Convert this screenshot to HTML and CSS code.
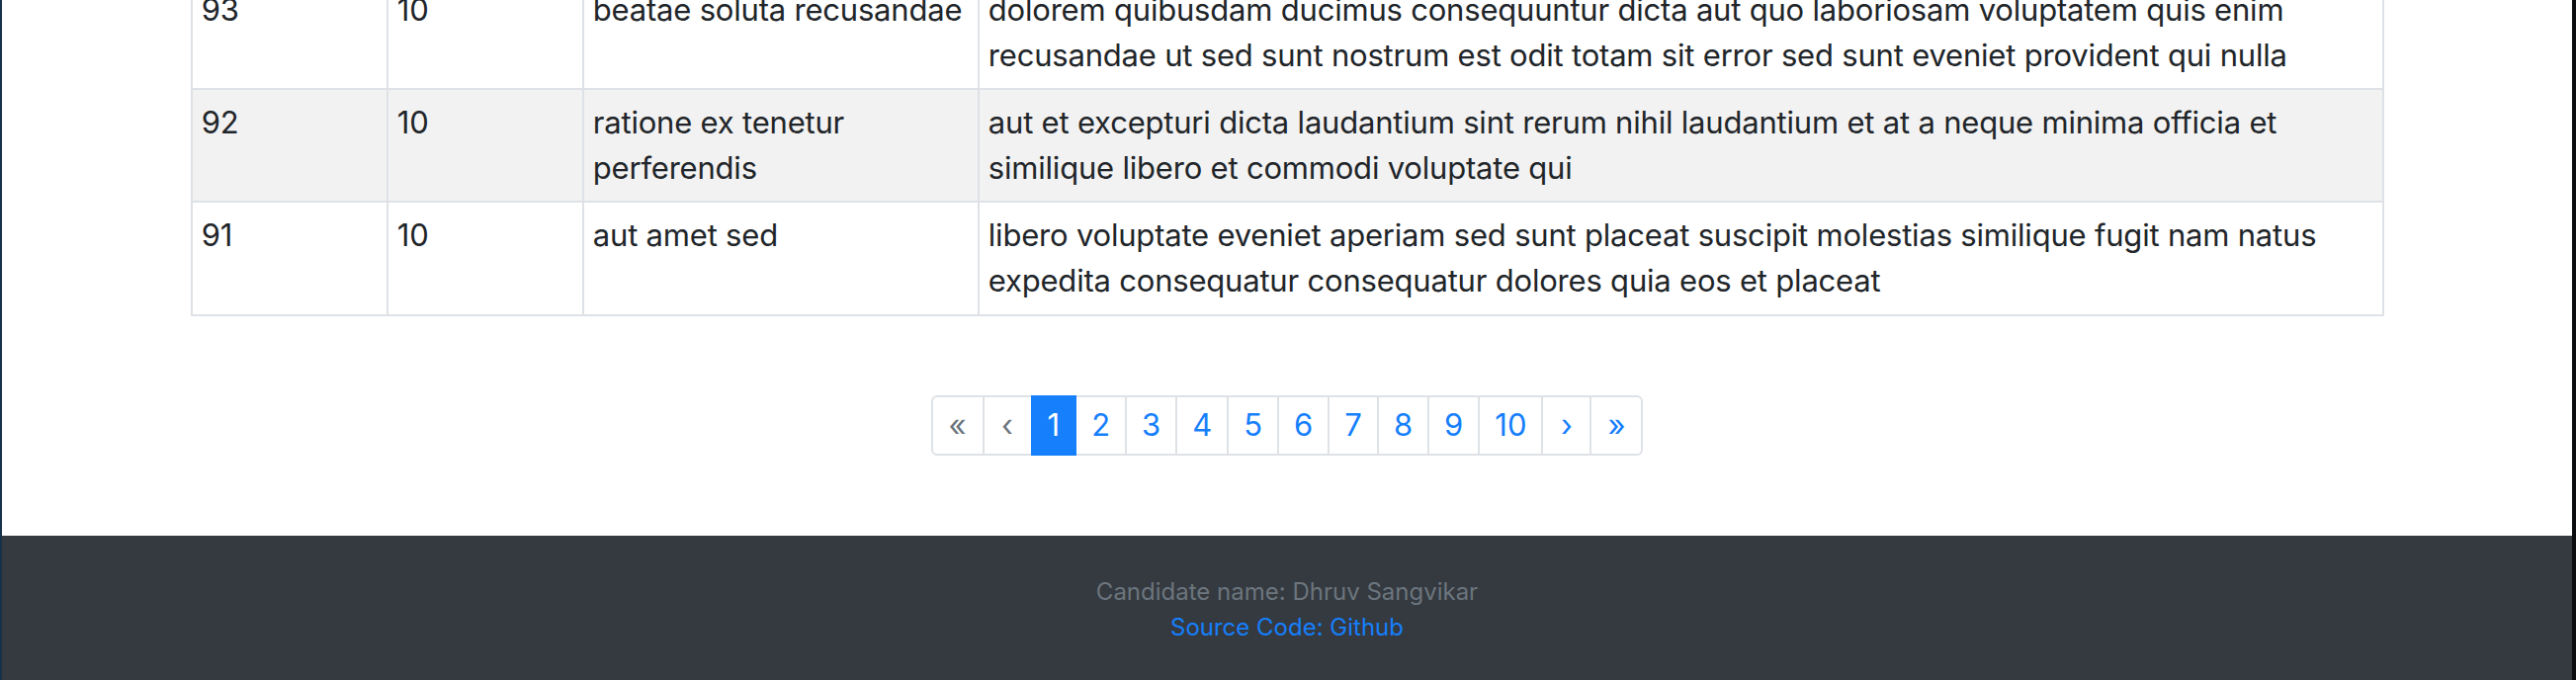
FILE: index.html
```html
<!DOCTYPE html>
<html lang="en">
<head>
<meta charset="utf-8">
<title>Posts</title>
<link rel="stylesheet" href="styles.css">
</head>
<body>
<main class="page">
  <table class="posts">
    <colgroup>
      <col class="c-id">
      <col class="c-user">
      <col class="c-title">
      <col class="c-body">
    </colgroup>
    <tbody>
      <tr>
        <td>93</td>
        <td>10</td>
        <td>beatae soluta recusandae</td>
        <td>dolorem quibusdam ducimus consequuntur dicta aut quo laboriosam voluptatem quis enim recusandae ut sed sunt nostrum est odit totam sit error sed sunt eveniet provident qui nulla</td>
      </tr>
      <tr class="striped">
        <td>92</td>
        <td>10</td>
        <td>ratione ex tenetur perferendis</td>
        <td>aut et excepturi dicta laudantium sint rerum nihil laudantium et at a neque minima officia et similique libero et commodi voluptate qui</td>
      </tr>
      <tr>
        <td>91</td>
        <td>10</td>
        <td>aut amet sed</td>
        <td>libero voluptate eveniet aperiam sed sunt placeat suscipit molestias similique fugit nam natus expedita consequatur consequatur dolores quia eos et placeat</td>
      </tr>
    </tbody>
  </table>

  <nav class="pager">
    <ul class="pagination">
      <li class="page-item disabled"><span class="page-link arrow-double">«</span></li>
      <li class="page-item disabled"><span class="page-link arrow-single">‹</span></li>
      <li class="page-item active"><span class="page-link">1</span></li>
      <li class="page-item"><a class="page-link" href="#">2</a></li>
      <li class="page-item"><a class="page-link" href="#">3</a></li>
      <li class="page-item"><a class="page-link" href="#">4</a></li>
      <li class="page-item"><a class="page-link" href="#">5</a></li>
      <li class="page-item"><a class="page-link" href="#">6</a></li>
      <li class="page-item"><a class="page-link" href="#">7</a></li>
      <li class="page-item"><a class="page-link" href="#">8</a></li>
      <li class="page-item"><a class="page-link" href="#">9</a></li>
      <li class="page-item"><a class="page-link" href="#">10</a></li>
      <li class="page-item"><a class="page-link arrow-single" href="#">›</a></li>
      <li class="page-item"><a class="page-link arrow-double" href="#">»</a></li>
    </ul>
  </nav>
</main>

<footer class="footer">
  <div class="footer-name">Candidate name: Dhruv Sangvikar</div>
  <a class="footer-link" href="#">Source Code: Github</a>
</footer>
</body>
</html>
```

FILE: styles.css
```css
* {
  box-sizing: border-box;
}

html {
  background: #0b0d11;
}

body {
  margin: 0;
  min-height: 688px;
  background: #ffffff;
  border-left: 2px solid #17314a;
  border-right: 4px solid #0b0d11;
  font-family: Inter, "Liberation Sans", Arial, sans-serif;
  font-size: 31px;
  line-height: 1.5;
  color: #212529;
  overflow: hidden;
}

.page {
  display: flex;
  flex-direction: column;
  align-items: center;
}

.posts {
  width: 2219px;
  margin-top: -25px;
  border-collapse: collapse;
  table-layout: fixed;
  border: 2px solid #dee2e6;
}

.c-id,
.c-user {
  width: 198px;
}

.c-title {
  width: 400px;
}

.posts td {
  border: 2px solid #dee2e6;
  padding: 9.6px 9.3px;
  vertical-align: top;
  letter-spacing: -0.2px;
}

.posts tr.striped {
  background: #f2f2f2;
}

.pager {
  margin: 80px 0 81px;
}

.pagination {
  display: flex;
  list-style: none;
  margin: 0;
  padding: 0;
}

.page-link {
  display: block;
  position: relative;
  padding: 9.1px 15px;
  margin-left: -2px;
  line-height: 1.25;
  color: #167ffc;
  text-decoration: none;
  background: #ffffff;
  border: 2px solid #dee2e6;
}

.page-link.arrow-double {
  padding-left: 16px;
  padding-right: 16px;
}

.page-link.arrow-single {
  padding-left: 17.5px;
  padding-right: 17.5px;
}

.page-item:first-child .page-link {
  margin-left: 0;
  border-radius: 6px 0 0 6px;
}

.page-item:last-child .page-link {
  border-radius: 0 6px 6px 0;
}

.page-item.active .page-link {
  z-index: 1;
  color: #ffffff;
  background: #167ffc;
  border-color: #167ffc;
}

.page-item.disabled .page-link {
  color: #6c757d;
}

.footer {
  background: #343a40;
  min-height: 160px;
  padding-top: 39px;
  text-align: center;
  font-size: 24px;
  line-height: 1.5;
}

.footer-name {
  color: #6c757d;
}

.footer-link {
  color: #167ffc;
  text-decoration: none;
}
```
